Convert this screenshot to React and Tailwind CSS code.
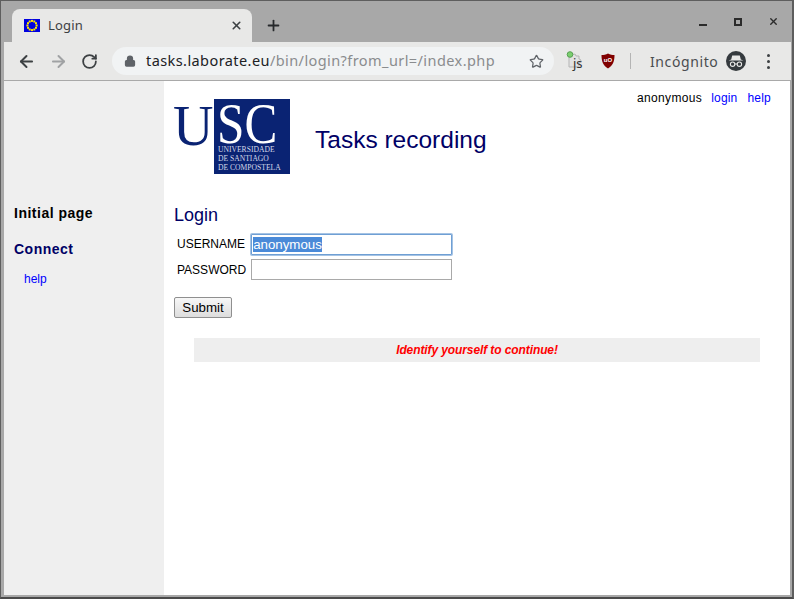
import { ArrowLeft, ArrowRight, RotateCw, Lock, Star, X, Plus } from 'lucide-react'

function EuFlag() {
  const stars = Array.from({ length: 12 }, (_, i) => {
    const a = (i * Math.PI) / 6
    return <rect key={i} x={7 + 4.6 * Math.cos(a)} y={5.5 + 4.6 * Math.sin(a)} width="2" height="2" fill="#ffe600" />
  })
  return (
    <svg width="16" height="13" viewBox="0 0 16 13" className="shrink-0">
      <rect width="16" height="13" fill="#0000e0" />
      {stars}
    </svg>
  )
}

function ExtensionJs() {
  return (
    <div className="relative w-[20px] h-[20px]">
      <svg width="20" height="20" viewBox="0 0 20 20" className="absolute left-0 top-0">
        <path d="M3 5h3a2 2 0 0 1 4 0h3v3a2 2 0 0 1 0 4v4H3z" fill="#e2e2e2" stroke="#b5b5b5" />
        <circle cx="4" cy="3.5" r="2.8" fill="#7ccf70" stroke="#55a050" />
      </svg>
      <span className="absolute left-[7px] top-[4px] text-[13px] leading-[16px] text-[#333] font-['Noto_Sans',sans-serif]">js</span>
    </div>
  )
}

function UblockShield() {
  return (
    <div className="relative w-[14px] h-[16px]">
      <svg width="14" height="16" viewBox="0 0 14 16" className="absolute left-0 top-0">
        <path d="M7 0.5 C9 1.6 11.5 2 13.5 2 C13.5 8 12 12.6 7 15.5 C2 12.6 0.5 8 0.5 2 C2.5 2 5 1.6 7 0.5z" fill="#800000" />
      </svg>
      <span className="absolute inset-x-0 top-[3px] text-center text-[6px] leading-[8px] font-bold text-white font-['Liberation_Sans',sans-serif]">uO</span>
    </div>
  )
}

function IncognitoIcon() {
  return (
    <svg width="20" height="20" viewBox="0 0 20 20">
      <circle cx="10" cy="10" r="10" fill="#353a3e" />
      <path d="M6.2 4.6 L13.8 4.6 L14.8 8.4 L17.4 9.4 L2.6 9.4 L5.2 8.4z" fill="#e8e8e7" />
      <circle cx="6.6" cy="13.2" r="2.2" fill="none" stroke="#e8e8e7" strokeWidth="1.1" />
      <circle cx="13.4" cy="13.2" r="2.2" fill="none" stroke="#e8e8e7" strokeWidth="1.1" />
      <path d="M8.8 13 h2.4" stroke="#e8e8e7" strokeWidth="1" />
    </svg>
  )
}

function UscLogo() {
  return (
    <div className="flex w-[116px] h-[75px] font-['Liberation_Serif',serif] text-[#0a2373]">
      <div className="w-[40px] text-[56px] leading-[48px] pt-[3px] ml-[-1px] mr-[1px]">U</div>
      <div className="w-[76px] h-[75px] bg-[#0a2373] text-white flex flex-col pl-[3px]">
        <div className="text-[56px] leading-[50px] h-[45px] scale-x-[0.88] origin-left">SC</div>
        <div className="text-[7.6px] leading-[9px] text-[#d5d9e8] mt-[1px] ml-[1px] whitespace-nowrap">
          <div>UNIVERSIDADE</div>
          <div>DE SANTIAGO</div>
          <div>DE COMPOSTELA</div>
        </div>
      </div>
    </div>
  )
}

export default function App() {
  return (
    <div className="w-[794px] h-[599px] overflow-hidden bg-[#a8a8a8] border-t border-l border-[#5e5e5e] border-r-2 border-b-2 border-r-[#5e5e5e] border-b-[#4a4a4a] flex flex-col font-['Liberation_Sans',sans-serif]">
      {/* Tab strip */}
      <div className="h-[41px] shrink-0 pt-[8px] pl-[11px] flex items-start">
        <div className="w-[240px] h-[33px] bg-[#e8e8e7] rounded-t-[8px] flex items-center pl-[12px] pr-[9px]">
          <EuFlag />
          <span className="ml-[8px] text-[13px] text-[#3c4043] font-['Noto_Sans',sans-serif] tracking-[0.2px]">Login</span>
          <X className="ml-auto text-[#3c4043]" size={13} strokeWidth={3} />
        </div>
        <Plus className="ml-[13px] mt-[8px] text-[#26282b]" size={17} strokeWidth={2.5} />
        <div className="ml-auto flex items-center text-[#2b2b2b] pr-[13px] pt-[7px]">
          <div className="w-[8px] h-[2px] bg-[#2b2b2b] mt-[7px] mr-[27px]" />
          <div className="w-[8px] h-[8px] border-2 border-[#2b2b2b] mr-[26px]" />
          <X size={11} strokeWidth={3} />
        </div>
      </div>

      {/* Toolbar */}
      <div className="h-[39px] shrink-0 ml-[3px] mr-[1px] bg-[#e8e8e7] border-b border-[#a9a9a9] flex items-center pl-[13px]">
        <ArrowLeft className="text-[#3c4043]" size={19} strokeWidth={2.5} />
        <ArrowRight className="ml-[13px] text-[#a0a2a4]" size={19} strokeWidth={2.5} />
        <RotateCw className="ml-[13px] text-[#3c4043]" size={17} strokeWidth={2.5} />
        <div className="ml-[14px] w-[442px] h-[28px] bg-[#f1f3f4] rounded-full flex items-center pl-[12px] pr-[10px]">
          <Lock className="text-[#5f6368]" size={12} strokeWidth={2.5} fill="currentColor" />
          <span className="ml-[10px] text-[14.5px] font-['Noto_Sans',sans-serif] tracking-[0.42px] whitespace-nowrap text-[#8a8c8e]">
            <span className="text-[#202124]">tasks.laborate.eu</span>/bin/login?from_url=/index.php
          </span>
          <Star className="ml-auto text-[#5f6368] shrink-0" size={15} strokeWidth={2} />
        </div>
        <div className="ml-[12px]"><ExtensionJs /></div>
        <div className="ml-[15px]"><UblockShield /></div>
        <div className="ml-[15px] w-px h-[16px] bg-[#b4b4b4]" />
        <span className="ml-[19px] text-[14px] font-['Noto_Sans',sans-serif] tracking-[0.6px] text-[#4a4d50]">Incógnito</span>
        <div className="ml-[8px]"><IncognitoIcon /></div>
        <div className="ml-[21px] flex flex-col gap-[3px]">
          <div className="w-[3px] h-[3px] rounded-full bg-[#3c4043]" />
          <div className="w-[3px] h-[3px] rounded-full bg-[#3c4043]" />
          <div className="w-[3px] h-[3px] rounded-full bg-[#3c4043]" />
        </div>
      </div>

      {/* Page */}
      <div className="flex-1 min-h-0 ml-[3px] mr-[2px] mb-[2px] bg-white flex">
        <div className="w-[160px] shrink-0 bg-[#efefef] pt-[124px] pl-[10px]">
          <div className="text-[14px] leading-[16px] font-bold tracking-[0.5px] text-black">Initial page</div>
          <div className="mt-[20px] text-[14px] leading-[16px] font-bold tracking-[0.5px] text-[#000066]">Connect</div>
          <div className="mt-[14px] ml-[10px] text-[12px] leading-[16px] text-[#0000ff]">help</div>
        </div>

        <div className="flex-1 min-w-0 px-[10px] pt-[10px]">
          <div className="flex items-start">
            <div className="mt-[8px]"><UscLogo /></div>
            <h1 className="ml-[25px] mt-[35px] text-[24.5px] leading-[28px] text-[#000066]">Tasks recording</h1>
            <div className="ml-auto mr-[9px] flex gap-[9px] text-[12px] leading-[14px] tracking-[0.2px]">
              <span className="text-black tracking-[0.35px]">anonymous</span>
              <span className="text-[#0000ff] mr-[1px]">login</span>
              <span className="text-[#0000ff]">help</span>
            </div>
          </div>

          <h2 className="mt-[31px] text-[18px] leading-[21px] text-[#000066]">Login</h2>
          <div className="mt-[8px] ml-[3px] grid grid-cols-[auto_201px] gap-x-[5px] gap-y-[4px] w-max items-center text-[12px] text-black">
            <span className="pb-[1px]">USERNAME</span>
            <div className="h-[21px] border border-[#6f9fd4] rounded-[1px] shadow-[0_0_0_1px_#a5c3e4] px-[1px] flex items-center bg-white">
              <span className="bg-[#4a8ad8] text-white text-[13.3px] leading-[15px]">anonymous</span>
            </div>
            <span>PASSWORD</span>
            <div className="h-[21px] border border-[#a9a9a9] bg-white" />
          </div>
          <button className="mt-[17px] block w-[58px] h-[21px] border border-[#8f8f8f] rounded-[2px] bg-gradient-to-b from-[#f7f7f7] to-[#dddddd] text-[13.3px] leading-[19px] text-black">Submit</button>

          <div className="mt-[20px] mx-[20px] h-[24px] bg-[#eeeeee] flex items-center justify-center text-[12px] tracking-[-0.1px] font-bold italic text-[#ff0000]">
            Identify yourself to continue!
          </div>
        </div>
      </div>
    </div>
  )
}
